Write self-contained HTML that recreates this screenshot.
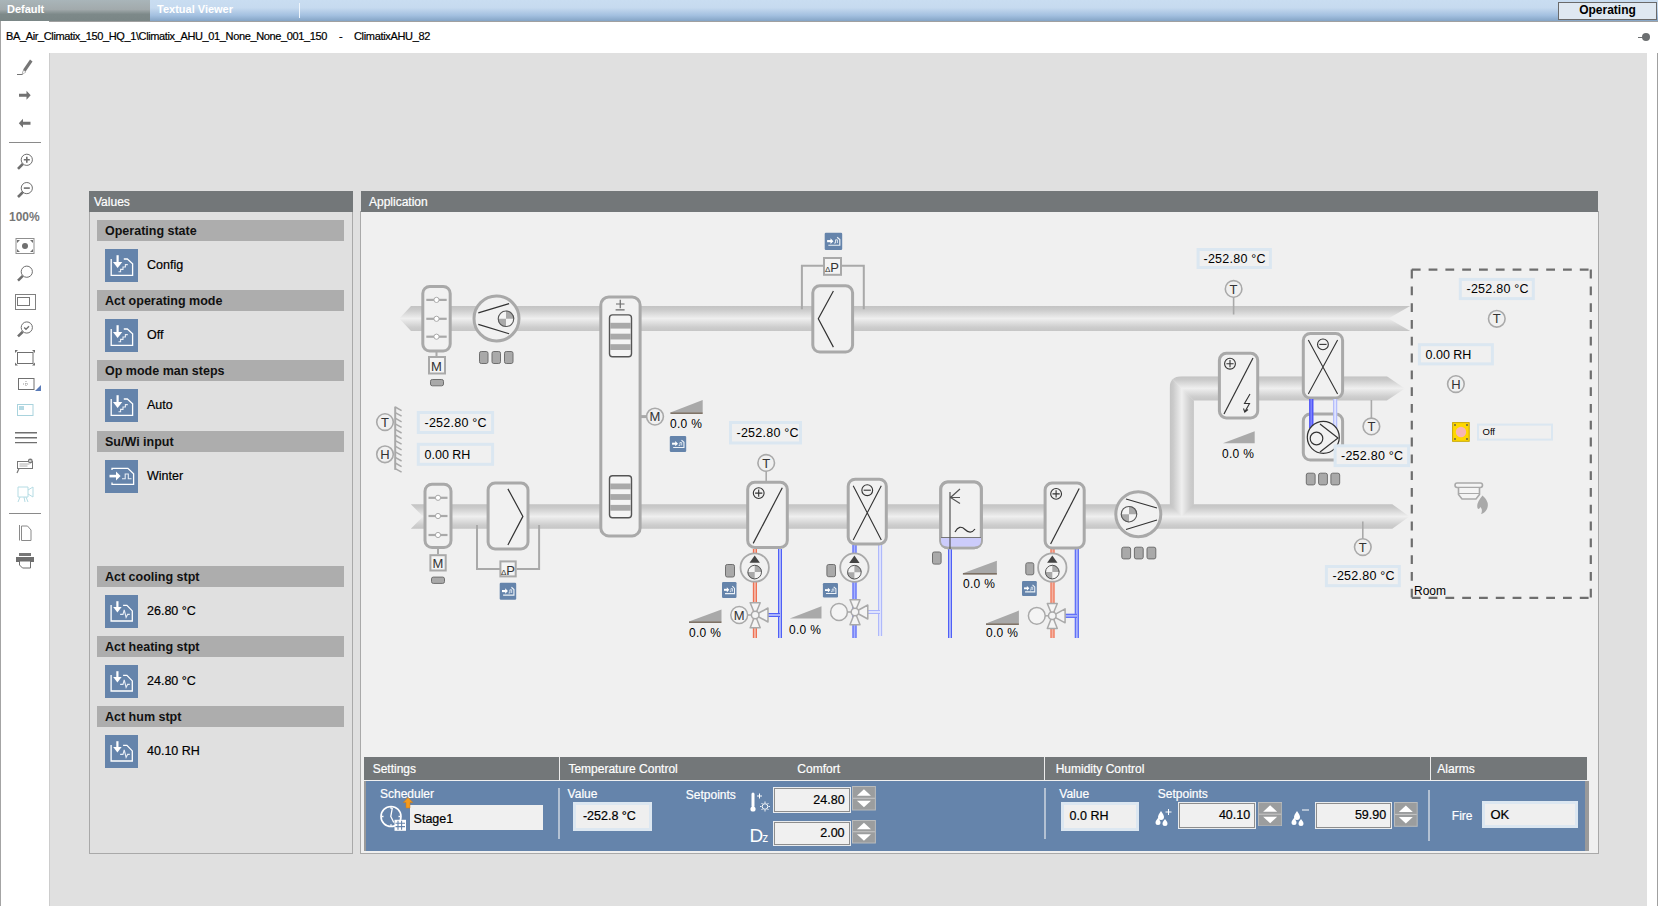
<!DOCTYPE html>
<html><head><meta charset="utf-8">
<style>
*{margin:0;padding:0;box-sizing:border-box}
html,body{width:1658px;height:906px;overflow:hidden;background:#fff;font-family:"Liberation Sans",sans-serif;position:relative}
.a{position:absolute}
#topbar{left:0;top:0;width:1658px;height:22px;background:linear-gradient(#c9ddf1 0%,#c6daef 35%,#a3c0e0 70%,#85a5c6 95%,#a0a0a0 95.5%)}
#tabdef{left:0;top:0;width:150px;height:21px;background:linear-gradient(#a9b5b9 0%,#a2aaac 45%,#7d8989 68%,#7a8686 100%)}
.tabt{font-weight:bold;font-size:11px;color:#fff;top:3px}
#opbtn{left:1558px;top:2px;width:99px;height:18px;background:#dfe8f1;border:1px solid #6a6a6a;font-weight:bold;font-size:12px;text-align:center;line-height:15px;color:#000}
#path{left:6px;top:30px;font-size:11px;color:#000;white-space:pre}
#lefttb{left:0;top:21px;width:49px;height:885px;border-left:1px solid #a4a4a4;background:#fff}
#main{left:49px;top:53px;width:1598px;height:853px;background:#e0e0e0;border-left:1px solid #cdcdcd}
#rline{left:1657px;top:53px;width:1px;height:853px;background:#a0a0a0}
.ph{background:#737779;color:#fff;font-size:12px;padding-left:5px;line-height:22px}
.sh{background:#adadad;color:#111;font-size:12.5px;font-weight:bold;padding-left:8px;line-height:23px;height:21px;overflow:hidden}
.ic{width:33px;height:33px;background:#6584ab}
.val{font-size:12.5px;color:#000}
svg text,.val,#path,.ph,.ts{-webkit-text-stroke:0.2px currentColor}
svg text[fill="#333"]{-webkit-text-stroke:0}
</style></head><body>
<div id="topbar" class="a"></div>
<div id="tabdef" class="a"></div>
<div class="a tabt" style="left:7px">Default</div>
<div class="a tabt" style="left:157px;color:#fff">Textual Viewer</div>
<div class="a" style="left:299px;top:3px;width:1px;height:15px;background:#f0f6fc"></div>
<div id="opbtn" class="a">Operating</div>
<div class="a" style="left:1638px;top:37px;width:6px;height:1px;background:#6c6f71"></div>
<div class="a" style="left:1642px;top:33px;width:8px;height:8px;border-radius:50%;background:#6c6f71"></div>
<div id="lefttb" class="a"></div>
<div id="main" class="a"></div>
<svg class="a" style="left:0;top:0" width="49" height="906" viewBox="0 0 49 906">
<g fill="none" stroke="#737373" stroke-width="1">
<path d="M17 74.5h5.5" stroke-width="1"/>
</g>
<path d="M22 74.5 L23.5 69 L30 59.5 L32.5 61.5 L26 71 Z" fill="#767676"/>
<path d="M22 74.5 L23.5 70 L26 72 Z" fill="#fff" stroke="#888" stroke-width="0.5"/>
<path d="M19 93.7h7.5v-3l4.2 4.5l-4.2 4.5v-3h-7.5z" fill="#727272"/>
<path d="M30.5 121.7h-7.5v-3l-4.2 4.5l4.2 4.5v-3h7.5z" fill="#727272"/>
<path d="M9 142.5h32" stroke="#8a8a8a" stroke-width="1"/>
<g fill="none" stroke="#6f6f6f">
<circle cx="26.8" cy="159.8" r="5.6" stroke-width="1"/>
<path d="M22.8 164 L18 168.8" stroke-width="2.6"/>
<path d="M26.8 156.8v6M23.8 159.8h6" stroke-width="1.6"/>
<circle cx="26.8" cy="188.1" r="5.6" stroke-width="1"/>
<path d="M22.8 192.3 L18 197" stroke-width="2.6"/>
<path d="M23.8 188.1h6" stroke-width="1.6"/>
<rect x="16" y="238.5" width="18" height="15" stroke="#8f8f8f" stroke-width="1"/>
<circle cx="26.8" cy="271.7" r="5.6" stroke-width="1"/>
<path d="M22.8 275.9 L18 280.6" stroke-width="2.6"/>
<rect x="15.5" y="294.5" width="20" height="15" stroke="#808080" stroke-width="1"/>
<rect x="17.5" y="297.5" width="12" height="8" stroke="#777" stroke-width="1"/>
<circle cx="26.8" cy="327.5" r="5.6" stroke-width="1"/>
<path d="M22.8 331.7 L18 336.4" stroke-width="2.6"/>
<path d="M24.2 327.5l1.8 1.8l3-3" stroke-width="1.4"/>
<rect x="17.5" y="352.5" width="15.5" height="11" stroke="#707070" stroke-width="1"/>
<rect x="18.5" y="378.5" width="15.5" height="11" stroke="#707070" stroke-width="1"/>
<path d="M15 432.8h22M15 437.7h22M15 442.6h22" stroke="#6f6f6f" stroke-width="1.4"/>
<rect x="17.5" y="461.5" width="15" height="7" stroke="#777"/>
<path d="M19.5 464h10M19.5 466h8" stroke="#999" stroke-width="0.8"/>
<path d="M19 468.5 L17 473" stroke="#777" stroke-width="1.2"/>
<path d="M9 513.5h32" stroke="#8a8a8a"/>
<path d="M19.5 525v15.5M21.5 526h6l3.5 4v10.5h-9.5z" stroke="#8a8a8a" stroke-width="1"/>
</g>
<circle cx="25" cy="246" r="3" fill="#707070"/>
<path d="M17 240h3l-3 3zM33 240h-3l3 3zM17 252h3l-3-3zM33 252h-3l3-3z" fill="#707070"/>
<path d="M15 350h3l-3 3zM35 350h-3l3 3zM15 365.5h3l-3-3zM35 365.5h-3l3-3z" fill="#707070"/>
<path d="M26 381v6M23 384h6" stroke="#999" stroke-width="1" stroke-dasharray="1 1"/>
<path d="M41 385v6h-6z" fill="#5a7bb8"/>
<rect x="17.5" y="404.5" width="15.5" height="11" fill="none" stroke="#a9d3dd" stroke-width="1"/>
<rect x="19" y="406" width="5" height="4" fill="#b5d9e3"/>
<circle cx="30.3" cy="461" r="2.4" fill="#777"/><path d="M29.2 459.9l2.2 2.2M31.4 459.9l-2.2 2.2" stroke="#fff" stroke-width="0.8"/>
<path d="M18 487h10v10h-10zM28 490l5-3v10l-5-3M20 497l-2 5M24 497l1 5M26 497l2 5" fill="none" stroke="#b5dce4" stroke-width="1"/>
<path d="M19 556h12v-3h-12z" fill="#777"/>
<path d="M16 557h18v5h-3v-1h-12v1h-3z" fill="#6f6f6f"/>
<path d="M19.5 561h11v7h-8l-3-3z" fill="#fff" stroke="#6f6f6f" stroke-width="1"/>
</svg>
<div id="path" class="a" style="letter-spacing:-0.37px">BA_Air_Climatix_150_HQ_1\Climatix_AHU_01_None_None_001_150</div><div class="a ts" style="left:339px;top:30px;font-size:11px">-</div><div class="a ts" style="left:354px;top:30px;font-size:11px;letter-spacing:-0.33px">ClimatixAHU_82</div>

<div id="rline" class="a"></div>
<div class="a" style="left:9px;top:210px;font-size:12px;font-weight:bold;color:#767676">100%</div>

<!-- Values panel -->
<div class="a" style="left:89px;top:191px;width:264px;height:663px;border:1px solid #a9a9a9;border-top:none"></div>
<div class="a ph" style="left:89px;top:191px;width:264px;height:21px">Values</div>

<div class="a sh" style="left:97px;top:220px;width:247px">Operating state</div>
<svg class="a ic" style="left:105px;top:249px" width="33" height="33" viewBox="0 0 33 33"><rect width="33" height="33" fill="#6584ab"/><path d="M6.2 10V26.3H27.6V14.8L22.3 10H18.8" fill="none" stroke="#fff" stroke-width="1.3"/><path d="M12.6 6.2V14" stroke="#fff" stroke-width="2.2"/><path d="M8 13L17.3 13L12.6 19Z" fill="#fff"/><path d="M13.5 22.8H15.6V20.4H18V18H20.4V15.6H22.8" fill="none" stroke="#e8eef6" stroke-width="1.1"/></svg>
<div class="a val" style="left:147px;top:258px">Config</div>
<div class="a sh" style="left:97px;top:290px;width:247px">Act operating mode</div>
<svg class="a ic" style="left:105px;top:319px" width="33" height="33" viewBox="0 0 33 33"><rect width="33" height="33" fill="#6584ab"/><path d="M6.2 10V26.3H27.6V14.8L22.3 10H18.8" fill="none" stroke="#fff" stroke-width="1.3"/><path d="M12.6 6.2V14" stroke="#fff" stroke-width="2.2"/><path d="M8 13L17.3 13L12.6 19Z" fill="#fff"/><path d="M13.5 22.8H15.6V20.4H18V18H20.4V15.6H22.8" fill="none" stroke="#e8eef6" stroke-width="1.1"/></svg>
<div class="a val" style="left:147px;top:328px">Off</div>
<div class="a sh" style="left:97px;top:360px;width:247px">Op mode man steps</div>
<svg class="a ic" style="left:105px;top:389px" width="33" height="33" viewBox="0 0 33 33"><rect width="33" height="33" fill="#6584ab"/><path d="M6.2 10V26.3H27.6V14.8L22.3 10H18.8" fill="none" stroke="#fff" stroke-width="1.3"/><path d="M12.6 6.2V14" stroke="#fff" stroke-width="2.2"/><path d="M8 13L17.3 13L12.6 19Z" fill="#fff"/><path d="M13.5 22.8H15.6V20.4H18V18H20.4V15.6H22.8" fill="none" stroke="#e8eef6" stroke-width="1.1"/></svg>
<div class="a val" style="left:147px;top:398px">Auto</div>
<div class="a sh" style="left:97px;top:431px;width:247px">Su/Wi input</div>
<svg class="a ic" style="left:105px;top:460px" width="33" height="33" viewBox="0 0 33 33"><rect width="33" height="33" fill="#6584ab"/><path d="M7 10V8.4H22.9L28.6 13.9V24.3H7V22.5" fill="none" stroke="#fff" stroke-width="1.3"/><path d="M4.5 16.1H11.8" stroke="#fff" stroke-width="2.6"/><path d="M11 11.6L15.6 16.1L11 20.6Z" fill="#fff"/><path d="M17 18.8H20.2V14H23.3V18.8H26.5" fill="none" stroke="#e8eef6" stroke-width="1.1"/></svg>
<div class="a val" style="left:147px;top:469px">Winter</div>
<div class="a sh" style="left:97px;top:566px;width:247px">Act cooling stpt</div>
<svg class="a ic" style="left:105px;top:595px" width="33" height="33" viewBox="0 0 33 33"><rect width="33" height="33" fill="#6584ab"/><path d="M6.1 9.9V26H27.3V15.9L21.9 10.4H18.1" fill="none" stroke="#fff" stroke-width="1.3"/><path d="M12.4 6.2V13" stroke="#fff" stroke-width="2.2"/><path d="M8.2 12L16.6 12L12.4 17.6Z" fill="#fff"/><path d="M15.1 19.4H18L19.2 14.8L21.1 22.5L22.6 19.4H24.8" fill="none" stroke="#e8eef6" stroke-width="1.1"/></svg>
<div class="a val" style="left:147px;top:604px">26.80 °C</div>
<div class="a sh" style="left:97px;top:636px;width:247px">Act heating stpt</div>
<svg class="a ic" style="left:105px;top:665px" width="33" height="33" viewBox="0 0 33 33"><rect width="33" height="33" fill="#6584ab"/><path d="M6.1 9.9V26H27.3V15.9L21.9 10.4H18.1" fill="none" stroke="#fff" stroke-width="1.3"/><path d="M12.4 6.2V13" stroke="#fff" stroke-width="2.2"/><path d="M8.2 12L16.6 12L12.4 17.6Z" fill="#fff"/><path d="M15.1 19.4H18L19.2 14.8L21.1 22.5L22.6 19.4H24.8" fill="none" stroke="#e8eef6" stroke-width="1.1"/></svg>
<div class="a val" style="left:147px;top:674px">24.80 °C</div>
<div class="a sh" style="left:97px;top:706px;width:247px">Act hum stpt</div>
<svg class="a ic" style="left:105px;top:735px" width="33" height="33" viewBox="0 0 33 33"><rect width="33" height="33" fill="#6584ab"/><path d="M6.1 9.9V26H27.3V15.9L21.9 10.4H18.1" fill="none" stroke="#fff" stroke-width="1.3"/><path d="M12.4 6.2V13" stroke="#fff" stroke-width="2.2"/><path d="M8.2 12L16.6 12L12.4 17.6Z" fill="#fff"/><path d="M15.1 19.4H18L19.2 14.8L21.1 22.5L22.6 19.4H24.8" fill="none" stroke="#e8eef6" stroke-width="1.1"/></svg>
<div class="a val" style="left:147px;top:744px">40.10 RH</div>

<!-- Application panel -->
<div class="a" style="left:360px;top:191px;width:239px;height:663px;"></div>
<div class="a" style="left:360px;top:211px;width:1239px;height:643px;background:#f0f0f0;border:1px solid #a9a9a9;border-top:none"></div>
<div class="a ph" style="left:361px;top:191px;width:1237px;height:21px;padding-left:8px">Application</div>

<!--SET-->
<div class="a" style="left:364px;top:757px;width:1223px;height:23px;background:#737779"></div>
<div class="a" style="left:559px;top:757px;width:1px;height:23px;background:#ececec"></div>
<div class="a" style="left:1044px;top:757px;width:1px;height:23px;background:#ececec"></div>
<div class="a" style="left:1430px;top:757px;width:1px;height:23px;background:#ececec"></div>
<div class="a ts" style="left:372.7px;top:762.7px;font-size:12px;line-height:12px;color:#fff;white-space:nowrap;">Settings</div>
<div class="a ts" style="left:568.4px;top:762.7px;font-size:12px;line-height:12px;color:#fff;white-space:nowrap;">Temperature Control</div>
<div class="a ts" style="left:797.3px;top:762.7px;font-size:12px;line-height:12px;color:#fff;white-space:nowrap;">Comfort</div>
<div class="a ts" style="left:1055.7px;top:762.7px;font-size:12px;line-height:12px;color:#fff;white-space:nowrap;">Humidity Control</div>
<div class="a ts" style="left:1437.3px;top:762.7px;font-size:12px;line-height:12px;color:#fff;white-space:nowrap;">Alarms</div>
<div class="a" style="left:364px;top:781px;width:1225px;height:70px;background:#6584ab;border-left:2px solid #9a9a9a;border-right:4px solid #9a9a9a"></div>
<div class="a" style="left:558px;top:788px;width:2px;height:51px;background:#b3c1d3"></div>
<div class="a" style="left:1044px;top:788.3px;width:2px;height:50.5px;background:#b3c1d3"></div>
<div class="a" style="left:1428px;top:790.2px;width:2px;height:50.5px;background:#b3c1d3"></div>
<div class="a ts" style="left:380px;top:787.6px;font-size:12px;line-height:12px;color:#fff;white-space:nowrap;">Scheduler</div>
<div class="a ts" style="left:567.6px;top:787.6px;font-size:12px;line-height:12px;color:#fff;white-space:nowrap;">Value</div>
<div class="a ts" style="left:685.8px;top:788.6px;font-size:12px;line-height:12px;color:#fff;white-space:nowrap;">Setpoints</div>
<div class="a ts" style="left:1059.3px;top:787.6px;font-size:12px;line-height:12px;color:#fff;white-space:nowrap;">Value</div>
<div class="a ts" style="left:1157.8px;top:787.8px;font-size:12px;line-height:12px;color:#fff;white-space:nowrap;">Setpoints</div>
<div class="a ts" style="left:1451.8px;top:809.7px;font-size:12px;line-height:12px;color:#fff;white-space:nowrap;">Fire</div>
<div class="a" style="left:410px;top:805px;width:133px;height:25px;background:#f0f0f0"></div>
<div class="a ts" style="left:413.6px;top:812.5px;font-size:12.5px;line-height:12.5px;color:#000;white-space:nowrap;">Stage1</div>
<div class="a" style="left:572.9px;top:802.1px;width:79.10000000000002px;height:28.899999999999977px;background:#efefef;border:3px solid #dce7f1"></div>
<div class="a ts" style="left:582.9px;top:810.1px;font-size:12.5px;line-height:12.5px;color:#000;white-space:nowrap;">-252.8 °C</div>
<div class="a" style="left:1060.9px;top:802.1px;width:77.89999999999986px;height:28.5px;background:#efefef;border:3px solid #dce7f1"></div>
<div class="a ts" style="left:1069.6px;top:810.2px;font-size:12.5px;line-height:12.5px;color:#000;white-space:nowrap;">0.0 RH</div>
<div class="a" style="left:1482.1px;top:801.2px;width:95.80000000000018px;height:26.399999999999977px;background:#efefef;border:3px solid #dce7f1"></div>
<div class="a ts" style="left:1490.4px;top:807.5px;font-size:13px;line-height:13px;color:#000;white-space:nowrap;">OK</div>
<div class="a" style="left:773.4px;top:787.4px;width:77.20000000000005px;height:25.300000000000068px;background:#f0f0f0;border:1px solid #e9ecef;box-shadow:inset 0 0 0 1px #8d8d8d"></div>
<div class="a ts" style="left:773.4px;top:793.5px;width:71.20000000000005px;text-align:right;font-size:12.5px;line-height:12.5px;color:#000">24.80</div>
<svg class="a" style="left:852.2px;top:786.2px" width="23.899999999999977" height="24.5" viewBox="0 0 23.899999999999977 24.5"><rect x="0.5" y="0.5" width="22.899999999999977" height="23.5" fill="#9b9d9e" stroke="#b9bbbc"/><line x1="1" y1="12.25" x2="22.899999999999977" y2="12.25" stroke="#c8c8c8" stroke-width="1"/><path d="M4.949999999999989 9.75L11.949999999999989 3.25L18.94999999999999 9.75Z" fill="#fff"/><path d="M4.949999999999989 14.75L11.949999999999989 21.25L18.94999999999999 14.75Z" fill="#fff"/></svg>
<div class="a" style="left:773.4px;top:820.7px;width:77.20000000000005px;height:25.799999999999955px;background:#f0f0f0;border:1px solid #e9ecef;box-shadow:inset 0 0 0 1px #8d8d8d"></div>
<div class="a ts" style="left:773.4px;top:826.6px;width:71.20000000000005px;text-align:right;font-size:12.5px;line-height:12.5px;color:#000">2.00</div>
<svg class="a" style="left:852.2px;top:820px" width="23.899999999999977" height="23.5" viewBox="0 0 23.899999999999977 23.5"><rect x="0.5" y="0.5" width="22.899999999999977" height="22.5" fill="#9b9d9e" stroke="#b9bbbc"/><line x1="1" y1="11.75" x2="22.899999999999977" y2="11.75" stroke="#c8c8c8" stroke-width="1"/><path d="M4.949999999999989 9.25L11.949999999999989 2.75L18.94999999999999 9.25Z" fill="#fff"/><path d="M4.949999999999989 14.25L11.949999999999989 20.75L18.94999999999999 14.25Z" fill="#fff"/></svg>
<div class="a" style="left:1178.2px;top:802.4px;width:78.20000000000005px;height:26.600000000000023px;background:#f0f0f0;border:1px solid #e9ecef;box-shadow:inset 0 0 0 1px #8d8d8d"></div>
<div class="a ts" style="left:1178.2px;top:808.6px;width:72.0px;text-align:right;font-size:12.5px;line-height:12.5px;color:#000">40.10</div>
<svg class="a" style="left:1257.7px;top:802.1px" width="24.299999999999955" height="24.399999999999977" viewBox="0 0 24.299999999999955 24.399999999999977"><rect x="0.5" y="0.5" width="23.299999999999955" height="23.399999999999977" fill="#9b9d9e" stroke="#b9bbbc"/><line x1="1" y1="12.199999999999989" x2="23.299999999999955" y2="12.199999999999989" stroke="#c8c8c8" stroke-width="1"/><path d="M5.149999999999977 9.699999999999989L12.149999999999977 3.1999999999999886L19.149999999999977 9.699999999999989Z" fill="#fff"/><path d="M5.149999999999977 14.699999999999989L12.149999999999977 21.19999999999999L19.149999999999977 14.699999999999989Z" fill="#fff"/></svg>
<div class="a" style="left:1315.1px;top:802.1px;width:77.40000000000009px;height:26.699999999999932px;background:#f0f0f0;border:1px solid #e9ecef;box-shadow:inset 0 0 0 1px #8d8d8d"></div>
<div class="a ts" style="left:1315.1px;top:809.3px;width:71.10000000000014px;text-align:right;font-size:12.5px;line-height:12.5px;color:#000">59.90</div>
<svg class="a" style="left:1393.9px;top:802px" width="23.699999999999818" height="24.799999999999955" viewBox="0 0 23.699999999999818 24.799999999999955"><rect x="0.5" y="0.5" width="22.699999999999818" height="23.799999999999955" fill="#9b9d9e" stroke="#b9bbbc"/><line x1="1" y1="12.399999999999977" x2="22.699999999999818" y2="12.399999999999977" stroke="#c8c8c8" stroke-width="1"/><path d="M4.849999999999909 9.899999999999977L11.849999999999909 3.3999999999999773L18.84999999999991 9.899999999999977Z" fill="#fff"/><path d="M4.849999999999909 14.899999999999977L11.849999999999909 21.399999999999977L18.84999999999991 14.899999999999977Z" fill="#fff"/></svg>
<svg class="a" style="left:0;top:0" width="1658" height="906" viewBox="0 0 1658 906">
<g fill="none" stroke="#fff" stroke-width="1.6">
<circle cx="391" cy="816.5" r="10"/>
<path d="M392.3 808L390.8 816.5L393.8 822.5M381.5 816.5h2M391 826v-1.8M400.5 816.5h-2M391 807v1.8" stroke-width="1.3"/>
</g>
<rect x="394.5" y="819.8" width="11.5" height="11" fill="#fff"/>
<path d="M395.5 823.2h9.5M395.5 826.6h9.5M398 820.8v9M401.6 820.8v9" stroke="#6584ab" stroke-width="1.1"/>
<path d="M408 797.5L412.8 802.5H410V808H406V802.5H403.2Z" fill="#f39a1e" stroke="#d07a10" stroke-width="0.5"/>
<g fill="#fff">
<rect x="751.5" y="792.5" width="3" height="15" rx="1.5"/>
<circle cx="753" cy="809" r="2.6"/>
</g>
<path d="M757 796h5M759.5 793.5v5" stroke="#fff" stroke-width="1"/>
<circle cx="765" cy="806.5" r="2.8" fill="none" stroke="#fff" stroke-width="1"/>
<path d="M765 801.5v1.5M765 810v1.5M760 806.5h1.5M768.5 806.5h1.5M761.5 803l1 1M767.5 809l1 1M768.5 803l-1 1M762.5 809l-1 1" stroke="#fff" stroke-width="0.9"/>
<text x="749.5" y="841.5" font-family="Liberation Sans, sans-serif" font-size="19" fill="#fff" letter-spacing="-1">D<tspan font-size="12" dy="0">z</tspan></text>
<path d="M1161 811q-3 4 -3 6a3 3 0 0 0 6 0q0 -2 -3 -6zM1158 818q-2.5 3 -2.5 4.5a2.5 2.5 0 0 0 5 0q0 -1.5 -2.5 -4.5zM1165 819q-2.5 3 -2.5 4.5a2.5 2.5 0 0 0 5 0q0 -1.5 -2.5 -4.5z" fill="#fff"/>
<path d="M1165.5 812h6M1168.5 809v6" stroke="#fff" stroke-width="1"/>
<path d="M1297 811q-3 4 -3 6a3 3 0 0 0 6 0q0 -2 -3 -6zM1294 818q-2.5 3 -2.5 4.5a2.5 2.5 0 0 0 5 0q0 -1.5 -2.5 -4.5zM1301 819q-2.5 3 -2.5 4.5a2.5 2.5 0 0 0 5 0q0 -1.5 -2.5 -4.5z" fill="#fff"/>
<path d="M1302 810h7" stroke="#fff" stroke-width="1"/>
</svg>
<!--/SET-->
<!--DIAG-->
<svg class="a" style="left:0;top:0" width="1658" height="906" viewBox="0 0 1658 906" font-family="Liberation Sans, sans-serif">
<defs><linearGradient id="dh" x1="0" y1="0" x2="0" y2="1"><stop offset="0" stop-color="#c3c3c3"/><stop offset="0.15" stop-color="#cbcbcb"/><stop offset="0.5" stop-color="#efefef"/><stop offset="0.85" stop-color="#cdcdcd"/><stop offset="1" stop-color="#c6c6c6"/></linearGradient><linearGradient id="dv" x1="0" y1="0" x2="1" y2="0"><stop offset="0" stop-color="#c3c3c3"/><stop offset="0.15" stop-color="#cbcbcb"/><stop offset="0.5" stop-color="#efefef"/><stop offset="0.85" stop-color="#cdcdcd"/><stop offset="1" stop-color="#c6c6c6"/></linearGradient></defs>
<path d="M399.3 318.5L411 306H1410.2L1388.5 318.5L1410.2 331H411Z" fill="url(#dh)"/>
<path d="M410.8 504.2L423 516.5L410.8 528.7H1392.3L1409.3 516.5L1392.3 504.2Z" fill="url(#dh)"/>
<defs><linearGradient id="dm" gradientUnits="userSpaceOnUse" x1="0" y1="376.2" x2="0" y2="400.5"><stop offset="0" stop-color="#c3c3c3"/><stop offset="0.15" stop-color="#cbcbcb"/><stop offset="0.5" stop-color="#efefef"/><stop offset="0.85" stop-color="#cdcdcd"/><stop offset="1" stop-color="#c6c6c6"/></linearGradient><linearGradient id="dvv" gradientUnits="userSpaceOnUse" x1="1169.6" y1="0" x2="1193.9" y2="0"><stop offset="0" stop-color="#c3c3c3"/><stop offset="0.15" stop-color="#cbcbcb"/><stop offset="0.5" stop-color="#efefef"/><stop offset="0.85" stop-color="#cdcdcd"/><stop offset="1" stop-color="#c6c6c6"/></linearGradient><clipPath id="cc"><path d="M1169.6 600V388.2Q1169.6 376.2 1181.6 376.2H1500V600Z"/></clipPath></defs>
<g clip-path="url(#cc)">
<path d="M1169.6 376.2H1386.9L1404.8 388.4L1386.9 400.5H1193.9Z" fill="url(#dm)"/>
<path d="M1169.6 376.2L1193.9 400.5V504.2L1181.75 516.4L1169.6 504.2Z" fill="url(#dvv)"/>
</g>
<rect x="422.8" y="286.5" width="27.399999999999977" height="64.5" rx="7" fill="#f1f1f1" stroke="#a9a9a9" stroke-width="3"/>
<line x1="426.3" y1="299.9" x2="446.7" y2="299.9" stroke="#a9a9a9" stroke-width="2.2"/>
<circle cx="436.5" cy="299.9" r="2.6" fill="#fff" stroke="#a9a9a9" stroke-width="1"/>
<line x1="426.3" y1="318.8" x2="446.7" y2="318.8" stroke="#a9a9a9" stroke-width="2.2"/>
<circle cx="436.5" cy="318.8" r="2.6" fill="#fff" stroke="#a9a9a9" stroke-width="1"/>
<line x1="426.3" y1="336.7" x2="446.7" y2="336.7" stroke="#a9a9a9" stroke-width="2.2"/>
<circle cx="436.5" cy="336.7" r="2.6" fill="#fff" stroke="#a9a9a9" stroke-width="1"/>
<line x1="436.5" y1="351.5" x2="436.5" y2="356" stroke="#a9a9a9" stroke-width="2"/>
<rect x="429" y="357" width="16" height="16.5" fill="#f4f4f4" stroke="#a9a9a9" stroke-width="2"/>
<text x="436.5" y="370.5" font-size="13" text-anchor="middle" fill="#333">M</text>
<rect x="430.5" y="379.5" width="13" height="6.300000000000011" rx="1.8" fill="#a9a9a9" stroke="#6f6f6f" stroke-width="1"/>
<circle cx="496.5" cy="318.5" r="22.5" fill="#f1f1f1" stroke="#a9a9a9" stroke-width="3"/>
<path d="M478.3 312.8L509.1 303.7M478.3 324.4L509.1 333.7" stroke="#333" stroke-width="1.2"/>
<circle cx="506.0" cy="318.8" r="8.3" fill="#f4f4f4"/>
<path d="M506.0 318.8V310.5A8.3 8.3 0 0 1 514.3 318.8Z M506.0 318.8V327.1A8.3 8.3 0 0 1 497.7 318.8Z" fill="#a9a9a9"/>
<circle cx="506.0" cy="318.8" r="7.750000000000001" fill="none" stroke="#555" stroke-width="1.1"/>
<rect x="479.5" y="351.5" width="8.5" height="12" rx="1.8" fill="#a9a9a9" stroke="#6f6f6f" stroke-width="1"/>
<rect x="492.0" y="351.5" width="8.5" height="12" rx="1.8" fill="#a9a9a9" stroke="#6f6f6f" stroke-width="1"/>
<rect x="504.5" y="351.5" width="8.5" height="12" rx="1.8" fill="#a9a9a9" stroke="#6f6f6f" stroke-width="1"/>
<rect x="600.8" y="297.0" width="39.30000000000007" height="238.89999999999998" rx="8" fill="#f1f1f1" stroke="#a9a9a9" stroke-width="3"/>
<path d="M616 304H624.5M620.25 299.8V308.2M615.6 309.8H624.6" stroke="#6a6a6a" stroke-width="1.2"/>
<rect x="609.5" y="314.9" width="22" height="41.79999999999999" rx="3" fill="#f4f4f4" stroke="#555" stroke-width="1.4"/>
<rect x="610.2" y="322.8" width="20.6" height="5.8" fill="#a9a9a9"/>
<rect x="610.2" y="333.70000000000005" width="20.6" height="5.8" fill="#a9a9a9"/>
<rect x="610.2" y="344.20000000000005" width="20.6" height="5.8" fill="#a9a9a9"/>
<rect x="609.5" y="475.8" width="22" height="41.99999999999998" rx="3" fill="#f4f4f4" stroke="#555" stroke-width="1.4"/>
<rect x="610.2" y="483.5" width="20.6" height="5.8" fill="#a9a9a9"/>
<rect x="610.2" y="494.1" width="20.6" height="5.8" fill="#a9a9a9"/>
<rect x="610.2" y="504.90000000000003" width="20.6" height="5.8" fill="#a9a9a9"/>
<line x1="641" y1="416.6" x2="647" y2="416.6" stroke="#a9a9a9" stroke-width="3"/>
<circle cx="655" cy="416.6" r="8.4" fill="#f0f0f0" stroke="#a9a9a9" stroke-width="1.6"/>
<text x="655" y="421.20000000000005" font-size="13" text-anchor="middle" fill="#333">M</text>
<path d="M670.4 412.6L702.7 400V412.6Z" fill="#a9a9a9"/>
<line x1="670.4" y1="413.20000000000005" x2="702.7" y2="413.20000000000005" stroke="#5a4a3a" stroke-width="1.2"/>
<text x="670" y="428" font-size="12" fill="#000" letter-spacing="0.3">0.0 %</text>
<rect x="669.8" y="435.9" width="16.4" height="16" rx="1.2" fill="#6584ab"/>
<g transform="translate(669.8 435.9) scale(1.025 1.000)"><path d="M2.2 7.8H6" stroke="#fff" stroke-width="2"/><path d="M5.3 5.2L8 7.8L5.3 10.4Z" fill="#fff"/><path d="M8.6 9.6H9.9V6.6H11.6V9.6" fill="none" stroke="#dfe7f0" stroke-width="0.9"/><path d="M3.3 11.6H13.8V6.4L11.4 4.2" fill="none" stroke="#eef3f8" stroke-width="1.1"/></g>
<path d="M801.9 309.2V265.8H823M842 265.8H863.8V309.2" fill="none" stroke="#a9a9a9" stroke-width="2"/>
<rect x="824" y="258" width="17" height="16.8" fill="#f4f4f4" stroke="#a9a9a9" stroke-width="2"/>
<text x="832" y="272.3" font-size="13" text-anchor="middle" fill="#333"><tspan font-size="8">Δ</tspan>P</text>
<rect x="824.7" y="232.7" width="17.5" height="17.3" rx="1.2" fill="#6584ab"/>
<g transform="translate(824.7 232.7) scale(1.094 1.081)"><path d="M2.2 7.8H6" stroke="#fff" stroke-width="2"/><path d="M5.3 5.2L8 7.8L5.3 10.4Z" fill="#fff"/><path d="M8.6 9.6H9.9V6.6H11.6V9.6" fill="none" stroke="#dfe7f0" stroke-width="0.9"/><path d="M3.3 11.6H13.8V6.4L11.4 4.2" fill="none" stroke="#eef3f8" stroke-width="1.1"/></g>
<rect x="812.8" y="285.8" width="39.80000000000007" height="66.19999999999999" rx="7" fill="#f1f1f1" stroke="#a9a9a9" stroke-width="3"/>
<path d="M833.4 291L818.3 318.8L833.4 347.1" fill="none" stroke="#333" stroke-width="1.2"/>
<line x1="1233.6" y1="297" x2="1233.6" y2="314.5" stroke="#a9a9a9" stroke-width="1.6"/>
<circle cx="1233.6" cy="288.9" r="8.3" fill="#f0f0f0" stroke="#a9a9a9" stroke-width="1.6"/>
<text x="1233.6" y="293.5" font-size="13" text-anchor="middle" fill="#333">T</text>
<rect x="1198.1" y="249.5" width="72.30000000000018" height="18" fill="#f0f0f0" stroke="#dbe7f1" stroke-width="3"/>
<text x="1203.5" y="262.8" font-size="12.5" fill="#000" letter-spacing="0.25">-252.80 °C</text>
<line x1="395.2" y1="406.6" x2="395.2" y2="469.8" stroke="#a9a9a9" stroke-width="2"/>
<path d="M395.2 407.0l6.4 3.6M395.2 412.6l6.4 3.6M395.2 418.2l6.4 3.6M395.2 423.8l6.4 3.6M395.2 429.4l6.4 3.6M395.2 435.0l6.4 3.6M395.2 440.6l6.4 3.6M395.2 446.2l6.4 3.6M395.2 451.8l6.4 3.6M395.2 457.4l6.4 3.6M395.2 463.0l6.4 3.6M395.2 468.6l6.4 3.6" stroke="#a9a9a9" stroke-width="1.5"/>
<circle cx="385" cy="422.1" r="8.3" fill="#f0f0f0" stroke="#a9a9a9" stroke-width="1.6"/>
<text x="385" y="426.70000000000005" font-size="13" text-anchor="middle" fill="#333">T</text>
<circle cx="385" cy="454.3" r="8.3" fill="#f0f0f0" stroke="#a9a9a9" stroke-width="1.6"/>
<text x="385" y="458.90000000000003" font-size="13" text-anchor="middle" fill="#333">H</text>
<rect x="418.3" y="412.5" width="74.30000000000001" height="20" fill="#f0f0f0" stroke="#dbe7f1" stroke-width="3"/>
<text x="424.5" y="426.8" font-size="12.5" fill="#000" letter-spacing="0.25">-252.80 °C</text>
<rect x="418.3" y="444.3" width="74.30000000000001" height="20.0" fill="#f0f0f0" stroke="#dbe7f1" stroke-width="3"/>
<text x="424.5" y="458.6" font-size="12.5" fill="#000" letter-spacing="0">0.00 RH</text>
<rect x="425.0" y="484.2" width="26.0" height="63.400000000000034" rx="7" fill="#f1f1f1" stroke="#a9a9a9" stroke-width="3"/>
<line x1="428.5" y1="497.8" x2="447.5" y2="497.8" stroke="#a9a9a9" stroke-width="2.2"/>
<circle cx="438.0" cy="497.8" r="2.6" fill="#fff" stroke="#a9a9a9" stroke-width="1"/>
<line x1="428.5" y1="516" x2="447.5" y2="516" stroke="#a9a9a9" stroke-width="2.2"/>
<circle cx="438.0" cy="516" r="2.6" fill="#fff" stroke="#a9a9a9" stroke-width="1"/>
<line x1="428.5" y1="535" x2="447.5" y2="535" stroke="#a9a9a9" stroke-width="2.2"/>
<circle cx="438.0" cy="535" r="2.6" fill="#fff" stroke="#a9a9a9" stroke-width="1"/>
<line x1="438.0" y1="548.1" x2="438.0" y2="554.2" stroke="#a9a9a9" stroke-width="2"/>
<rect x="430.4" y="555.2" width="15.300000000000011" height="15.299999999999955" fill="#f4f4f4" stroke="#a9a9a9" stroke-width="2"/>
<text x="438.0" y="567.5" font-size="13" text-anchor="middle" fill="#333">M</text>
<rect x="431.5" y="577.1" width="13" height="6.2999999999999545" rx="1.8" fill="#a9a9a9" stroke="#6f6f6f" stroke-width="1"/>
<path d="M477 525V568.9H500M516.5 568.9H539.1V525" fill="none" stroke="#a9a9a9" stroke-width="2"/>
<rect x="488.1" y="483.1" width="39.89999999999998" height="65.79999999999995" rx="7" fill="#f1f1f1" stroke="#a9a9a9" stroke-width="3"/>
<path d="M507.9 488.9L522.9 516.4L507.9 545" fill="none" stroke="#333" stroke-width="1.2"/>
<rect x="500.4" y="561.4" width="15.3" height="15" fill="#f4f4f4" stroke="#a9a9a9" stroke-width="2"/>
<text x="508" y="574.5" font-size="13" text-anchor="middle" fill="#333"><tspan font-size="8">Δ</tspan>P</text>
<rect x="499.7" y="582.8" width="16.5" height="17" rx="1.2" fill="#6584ab"/>
<g transform="translate(499.7 582.8) scale(1.031 1.062)"><path d="M2.2 7.8H6" stroke="#fff" stroke-width="2"/><path d="M5.3 5.2L8 7.8L5.3 10.4Z" fill="#fff"/><path d="M8.6 9.6H9.9V6.6H11.6V9.6" fill="none" stroke="#dfe7f0" stroke-width="0.9"/><path d="M3.3 11.6H13.8V6.4L11.4 4.2" fill="none" stroke="#eef3f8" stroke-width="1.1"/></g>
<rect x="752.9" y="549" width="4" height="89" fill="#f3b3a3"/>
<line x1="753.4" y1="549" x2="753.4" y2="638" stroke="#ef6a4a" stroke-width="1"/>
<line x1="756.4" y1="549" x2="756.4" y2="638" stroke="#ef6a4a" stroke-width="1"/>
<rect x="778" y="549" width="4" height="89" fill="#a9b3fb"/>
<line x1="778.5" y1="549" x2="778.5" y2="638" stroke="#4f5ff7" stroke-width="1"/>
<line x1="781.5" y1="549" x2="781.5" y2="638" stroke="#4f5ff7" stroke-width="1"/>
<rect x="767" y="613" width="13" height="4" fill="#a9b3fb"/>
<line x1="767" y1="613.5" x2="780" y2="613.5" stroke="#4f5ff7" stroke-width="1"/>
<line x1="767" y1="616.5" x2="780" y2="616.5" stroke="#4f5ff7" stroke-width="1"/>
<rect x="747.7" y="482.3" width="39.59999999999991" height="65.09999999999997" rx="7" fill="#f1f1f1" stroke="#a9a9a9" stroke-width="3"/>
<line x1="753.2" y1="543.4" x2="782.3" y2="487.8" stroke="#333" stroke-width="1.2"/>
<circle cx="758.7" cy="493.1" r="5.4" fill="none" stroke="#333" stroke-width="1.1"/><path d="M755.1 493.1h7.2M758.7 489.5v7.2" stroke="#333" stroke-width="1.1"/>
<line x1="766.2" y1="471" x2="766.2" y2="482" stroke="#a9a9a9" stroke-width="1.6"/>
<circle cx="766.2" cy="462.9" r="8.3" fill="#f0f0f0" stroke="#a9a9a9" stroke-width="1.6"/>
<text x="766.2" y="467.5" font-size="13" text-anchor="middle" fill="#333">T</text>
<rect x="730.5" y="422.5" width="70" height="20.5" fill="#f0f0f0" stroke="#dbe7f1" stroke-width="3"/>
<text x="736.5" y="437.05" font-size="12.5" fill="#000" letter-spacing="0.25">-252.80 °C</text>
<circle cx="754.7" cy="567.5" r="14.2" fill="#f1f1f1" stroke="#a9a9a9" stroke-width="1.8"/>
<path d="M749.5 562.8H759.9000000000001L754.7 555.5Z" fill="#444"/>
<circle cx="754.7" cy="572.1" r="7.3" fill="#f4f4f4"/>
<path d="M754.7 572.1V564.8000000000001A7.3 7.3 0 0 1 762.0 572.1Z M754.7 572.1V579.4A7.3 7.3 0 0 1 747.4000000000001 572.1Z" fill="#a9a9a9"/>
<circle cx="754.7" cy="572.1" r="6.8" fill="none" stroke="#555" stroke-width="1.0"/>
<path d="M750.2 602.7H760.2L755.2 615Z M750.2 627.8H760.2L755.2 615Z M768.0 608V622L755.2 615Z" fill="#f4f4f4" stroke="#a9a9a9" stroke-width="1.5" stroke-linejoin="round"/>
<circle cx="755.2" cy="615" r="3.8" fill="#f4f4f4" stroke="#a9a9a9" stroke-width="1.5"/>
<line x1="747.2" y1="615" x2="751.7" y2="615" stroke="#a9a9a9" stroke-width="1.5"/>
<circle cx="739.2" cy="615" r="8.4" fill="#f4f4f4" stroke="#a9a9a9" stroke-width="1.5"/>
<text x="739.2" y="619.6" font-size="13" text-anchor="middle" fill="#333">M</text>
<rect x="725.5" y="564.5" width="9" height="12.5" rx="1.8" fill="#a9a9a9" stroke="#6f6f6f" stroke-width="1"/>
<rect x="722" y="582" width="14.5" height="16" rx="1.2" fill="#6584ab"/>
<g transform="translate(722 582) scale(0.906 1.000)"><path d="M2.2 7.8H6" stroke="#fff" stroke-width="2"/><path d="M5.3 5.2L8 7.8L5.3 10.4Z" fill="#fff"/><path d="M8.6 9.6H9.9V6.6H11.6V9.6" fill="none" stroke="#dfe7f0" stroke-width="0.9"/><path d="M3.3 11.6H13.8V6.4L11.4 4.2" fill="none" stroke="#eef3f8" stroke-width="1.1"/></g>
<path d="M689 621.5L721.5 609.5V621.5Z" fill="#a9a9a9"/>
<line x1="689" y1="622.1" x2="721.5" y2="622.1" stroke="#5a4a3a" stroke-width="1.2"/>
<text x="689" y="637" font-size="12" fill="#000" letter-spacing="0.3">0.0 %</text>
<rect x="852.5" y="545" width="4" height="93" fill="#a9b3fb"/>
<line x1="853.0" y1="545" x2="853.0" y2="638" stroke="#4f5ff7" stroke-width="1"/>
<line x1="856.0" y1="545" x2="856.0" y2="638" stroke="#4f5ff7" stroke-width="1"/>
<rect x="878.1" y="545" width="4" height="91" fill="#dfe3fd"/>
<line x1="878.6" y1="545" x2="878.6" y2="636" stroke="#aab4fb" stroke-width="1"/>
<line x1="881.6" y1="545" x2="881.6" y2="636" stroke="#aab4fb" stroke-width="1"/>
<rect x="867" y="610" width="13" height="4" fill="#dfe3fd"/>
<line x1="867" y1="610.5" x2="880" y2="610.5" stroke="#aab4fb" stroke-width="1"/>
<line x1="867" y1="613.5" x2="880" y2="613.5" stroke="#aab4fb" stroke-width="1"/>
<rect x="848.2" y="479.2" width="38.09999999999991" height="64.69999999999999" rx="7" fill="#f1f1f1" stroke="#a9a9a9" stroke-width="3"/>
<path d="M853.2 485.7L881.3 539.9M881.3 485.7L853.2 539.9" stroke="#333" stroke-width="1.1"/>
<circle cx="867.25" cy="490.2" r="5.4" fill="#f1f1f1" stroke="#333" stroke-width="1.1"/><path d="M863.65 490.2h7.2" stroke="#333" stroke-width="1.1"/>
<circle cx="854.4" cy="567.6" r="14.2" fill="#f1f1f1" stroke="#a9a9a9" stroke-width="1.8"/>
<path d="M849.1999999999999 562.9H859.6L854.4 555.6Z" fill="#444"/>
<circle cx="854.4" cy="572.2" r="7.3" fill="#f4f4f4"/>
<path d="M854.4 572.2V564.9000000000001A7.3 7.3 0 0 1 861.6999999999999 572.2Z M854.4 572.2V579.5A7.3 7.3 0 0 1 847.1 572.2Z" fill="#a9a9a9"/>
<circle cx="854.4" cy="572.2" r="6.8" fill="none" stroke="#555" stroke-width="1.0"/>
<path d="M850 599.7H860L855 612Z M850 624.8H860L855 612Z M867.8 605V619L855 612Z" fill="#f4f4f4" stroke="#a9a9a9" stroke-width="1.5" stroke-linejoin="round"/>
<circle cx="855" cy="612" r="3.8" fill="#f4f4f4" stroke="#a9a9a9" stroke-width="1.5"/>
<line x1="847" y1="612" x2="851.5" y2="612" stroke="#a9a9a9" stroke-width="1.5"/>
<circle cx="839" cy="612" r="8.4" fill="#f4f4f4" stroke="#a9a9a9" stroke-width="1.5"/>
<rect x="826.9" y="564.5" width="8.600000000000023" height="12.200000000000045" rx="1.8" fill="#a9a9a9" stroke="#6f6f6f" stroke-width="1"/>
<rect x="822.9" y="583" width="15.1" height="14.5" rx="1.2" fill="#6584ab"/>
<g transform="translate(822.9 583) scale(0.944 0.906)"><path d="M2.2 7.8H6" stroke="#fff" stroke-width="2"/><path d="M5.3 5.2L8 7.8L5.3 10.4Z" fill="#fff"/><path d="M8.6 9.6H9.9V6.6H11.6V9.6" fill="none" stroke="#dfe7f0" stroke-width="0.9"/><path d="M3.3 11.6H13.8V6.4L11.4 4.2" fill="none" stroke="#eef3f8" stroke-width="1.1"/></g>
<path d="M789.7 618.4L821.5 606.2V618.4Z" fill="#a9a9a9"/>
<text x="789" y="634" font-size="12" fill="#000" letter-spacing="0.3">0.0 %</text>
<rect x="948" y="549" width="4" height="89" fill="#a9b3fb"/>
<line x1="948.5" y1="549" x2="948.5" y2="638" stroke="#4f5ff7" stroke-width="1"/>
<line x1="951.5" y1="549" x2="951.5" y2="638" stroke="#4f5ff7" stroke-width="1"/>
<rect x="940.8" y="482.1" width="40.5" height="65.60000000000002" rx="7" fill="#f1f1f1" stroke="#a9a9a9" stroke-width="3"/>
<path d="M941 537.5H981V541Q981 547.5 974 547.5H948Q941 547.5 941 541Z" fill="#ccccfb"/>
<line x1="941" y1="537.5" x2="981" y2="537.5" stroke="#777" stroke-width="1.2"/>
<rect x="940.8" y="482.1" width="40.5" height="65.60000000000002" rx="7" fill="#f1f1f1" stroke="#a9a9a9" stroke-width="3"/>
<path d="M941 537.5H981V541Q981 546 975 546.5H947Q941 546 941 541Z" fill="#ccccfb"/>
<line x1="941" y1="537.5" x2="981" y2="537.5" stroke="#777" stroke-width="1.2"/>
<path d="M950 492V549M960 489L950.5 497.5L960 503.5M950.5 497.5H960" fill="none" stroke="#555" stroke-width="1.2"/>
<path d="M955 532Q959.5 524 965 529.5T975 529" fill="none" stroke="#333" stroke-width="1.2"/>
<rect x="932.5" y="552.0" width="8.600000000000023" height="12.100000000000023" rx="1.8" fill="#a9a9a9" stroke="#6f6f6f" stroke-width="1"/>
<path d="M962.9 573.3L996.9 560.8V573.3Z" fill="#a9a9a9"/>
<line x1="962.9" y1="573.9" x2="996.9" y2="573.9" stroke="#5a4a3a" stroke-width="1.2"/>
<text x="963" y="588.2" font-size="12" fill="#000" letter-spacing="0.3">0.0 %</text>
<rect x="1050.5" y="549" width="4" height="89" fill="#f3b3a3"/>
<line x1="1051.0" y1="549" x2="1051.0" y2="638" stroke="#ef6a4a" stroke-width="1"/>
<line x1="1054.0" y1="549" x2="1054.0" y2="638" stroke="#ef6a4a" stroke-width="1"/>
<rect x="1074.8" y="549" width="4" height="89" fill="#a9b3fb"/>
<line x1="1075.3" y1="549" x2="1075.3" y2="638" stroke="#4f5ff7" stroke-width="1"/>
<line x1="1078.3" y1="549" x2="1078.3" y2="638" stroke="#4f5ff7" stroke-width="1"/>
<rect x="1065" y="613.8" width="12" height="4" fill="#a9b3fb"/>
<line x1="1065" y1="614.3" x2="1077" y2="614.3" stroke="#4f5ff7" stroke-width="1"/>
<line x1="1065" y1="617.3" x2="1077" y2="617.3" stroke="#4f5ff7" stroke-width="1"/>
<rect x="1045.1" y="483.1" width="39.100000000000136" height="65.0" rx="7" fill="#f1f1f1" stroke="#a9a9a9" stroke-width="3"/>
<line x1="1050.6" y1="544.1" x2="1079.2" y2="488.6" stroke="#333" stroke-width="1.2"/>
<circle cx="1056.1" cy="493.90000000000003" r="5.4" fill="none" stroke="#333" stroke-width="1.1"/><path d="M1052.5 493.90000000000003h7.2M1056.1 490.3v7.2" stroke="#333" stroke-width="1.1"/>
<circle cx="1052.3" cy="567.5" r="14.2" fill="#f1f1f1" stroke="#a9a9a9" stroke-width="1.8"/>
<path d="M1047.1 562.8H1057.5L1052.3 555.5Z" fill="#444"/>
<circle cx="1052.3" cy="572.1" r="7.3" fill="#f4f4f4"/>
<path d="M1052.3 572.1V564.8000000000001A7.3 7.3 0 0 1 1059.6 572.1Z M1052.3 572.1V579.4A7.3 7.3 0 0 1 1045.0 572.1Z" fill="#a9a9a9"/>
<circle cx="1052.3" cy="572.1" r="6.8" fill="none" stroke="#555" stroke-width="1.0"/>
<path d="M1047.3 603.5H1057.3L1052.3 615.8Z M1047.3 628.5999999999999H1057.3L1052.3 615.8Z M1065.1 608.8V622.8L1052.3 615.8Z" fill="#f4f4f4" stroke="#a9a9a9" stroke-width="1.5" stroke-linejoin="round"/>
<circle cx="1052.3" cy="615.8" r="3.8" fill="#f4f4f4" stroke="#a9a9a9" stroke-width="1.5"/>
<line x1="1044.8" y1="615.8" x2="1048.8" y2="615.8" stroke="#a9a9a9" stroke-width="1.5"/>
<circle cx="1036.8" cy="615.8" r="8.4" fill="#f4f4f4" stroke="#a9a9a9" stroke-width="1.5"/>
<rect x="1025.8" y="562.8" width="8.0" height="12.0" rx="1.8" fill="#a9a9a9" stroke="#6f6f6f" stroke-width="1"/>
<rect x="1022" y="581" width="14.8" height="15" rx="1.2" fill="#6584ab"/>
<g transform="translate(1022 581) scale(0.925 0.938)"><path d="M2.2 7.8H6" stroke="#fff" stroke-width="2"/><path d="M5.3 5.2L8 7.8L5.3 10.4Z" fill="#fff"/><path d="M8.6 9.6H9.9V6.6H11.6V9.6" fill="none" stroke="#dfe7f0" stroke-width="0.9"/><path d="M3.3 11.6H13.8V6.4L11.4 4.2" fill="none" stroke="#eef3f8" stroke-width="1.1"/></g>
<path d="M986 623.5L1018.9 610.6V623.5Z" fill="#a9a9a9"/>
<line x1="986" y1="624.1" x2="1018.9" y2="624.1" stroke="#5a4a3a" stroke-width="1.2"/>
<text x="986" y="637" font-size="12" fill="#000" letter-spacing="0.3">0.0 %</text>
<circle cx="1138.3" cy="514.2" r="22.5" fill="#f1f1f1" stroke="#a9a9a9" stroke-width="3"/>
<path d="M1157.0 508.00000000000006L1126.0 499.00000000000006M1157.0 520.0L1126.0 529.5" stroke="#333" stroke-width="1.2"/>
<circle cx="1129.0" cy="514.2" r="8.3" fill="#f4f4f4"/>
<path d="M1129.0 514.2V505.90000000000003A8.3 8.3 0 0 1 1137.3 514.2Z M1129.0 514.2V522.5A8.3 8.3 0 0 1 1120.7 514.2Z" fill="#a9a9a9"/>
<circle cx="1129.0" cy="514.2" r="7.750000000000001" fill="none" stroke="#555" stroke-width="1.1"/>
<rect x="1121.8" y="547.2" width="8.8" height="11.7" rx="1.8" fill="#a9a9a9" stroke="#6f6f6f" stroke-width="1"/>
<rect x="1134.3999999999999" y="547.2" width="8.8" height="11.7" rx="1.8" fill="#a9a9a9" stroke="#6f6f6f" stroke-width="1"/>
<rect x="1147.0" y="547.2" width="8.8" height="11.7" rx="1.8" fill="#a9a9a9" stroke="#6f6f6f" stroke-width="1"/>
<rect x="1219.4" y="353.3" width="38.299999999999955" height="64.59999999999997" rx="7" fill="#f1f1f1" stroke="#a9a9a9" stroke-width="3"/>
<line x1="1224" y1="414" x2="1253" y2="358" stroke="#333" stroke-width="1.2"/>
<circle cx="1230" cy="363.7" r="5.4" fill="none" stroke="#333" stroke-width="1.1"/><path d="M1226.4 363.7h7.2M1230 360.1v7.2" stroke="#333" stroke-width="1.1"/>
<path d="M1250 394L1244.5 403.5L1249.5 403.5L1245 411.5M1243.5 408.5L1244.8 412L1248 409.5" fill="none" stroke="#333" stroke-width="1.1"/>
<path d="M1222.9 443.3L1254.7 431.3V443.3Z" fill="#a9a9a9"/>
<text x="1222" y="458.2" font-size="12" fill="#000" letter-spacing="0.3">0.0 %</text>
<rect x="1303.3" y="333.4" width="39.299999999999955" height="64.60000000000002" rx="7" fill="#f1f1f1" stroke="#a9a9a9" stroke-width="3"/>
<path d="M1308.3 339.9L1337.6 394.0M1337.6 339.9L1308.3 394.0" stroke="#333" stroke-width="1.1"/>
<circle cx="1322.9499999999998" cy="344.4" r="5.4" fill="#f1f1f1" stroke="#333" stroke-width="1.1"/><path d="M1319.35 344.4h7.2" stroke="#333" stroke-width="1.1"/>
<rect x="1303.3" y="413.9" width="39.299999999999955" height="46.10000000000002" rx="7" fill="#f1f1f1" stroke="#a9a9a9" stroke-width="3"/>
<rect x="1309.3" y="399" width="4" height="29" fill="#7c82fb"/>
<line x1="1309.8" y1="399" x2="1309.8" y2="428" stroke="#3f43f5" stroke-width="1"/>
<line x1="1312.8" y1="399" x2="1312.8" y2="428" stroke="#3f43f5" stroke-width="1"/>
<rect x="1333.2" y="399" width="4" height="29" fill="#dfe3fd"/>
<line x1="1333.7" y1="399" x2="1333.7" y2="428" stroke="#aab4fb" stroke-width="1"/>
<line x1="1336.7" y1="399" x2="1336.7" y2="428" stroke="#aab4fb" stroke-width="1"/>
<circle cx="1323.3" cy="437.3" r="16" fill="#f1f1f1" stroke="#333" stroke-width="1.2"/>
<circle cx="1316.5" cy="438.5" r="6.3" fill="none" stroke="#333" stroke-width="1.2"/>
<path d="M1320 424L1338 438L1320 452" fill="none" stroke="#333" stroke-width="1.2"/>
<rect x="1306.3" y="473.2" width="8.8" height="11.7" rx="1.8" fill="#a9a9a9" stroke="#6f6f6f" stroke-width="1"/>
<rect x="1318.6" y="473.2" width="8.8" height="11.7" rx="1.8" fill="#a9a9a9" stroke="#6f6f6f" stroke-width="1"/>
<rect x="1330.8999999999999" y="473.2" width="8.8" height="11.7" rx="1.8" fill="#a9a9a9" stroke="#6f6f6f" stroke-width="1"/>
<line x1="1371.4" y1="400" x2="1371.4" y2="418" stroke="#a9a9a9" stroke-width="1.6"/>
<circle cx="1371.4" cy="426.4" r="8.3" fill="#f0f0f0" stroke="#a9a9a9" stroke-width="1.6"/>
<text x="1371.4" y="431.0" font-size="13" text-anchor="middle" fill="#333">T</text>
<rect x="1335.1" y="445.8" width="73.5" height="19.80000000000001" fill="#f0f0f0" stroke="#dbe7f1" stroke-width="3"/>
<text x="1341" y="460.00000000000006" font-size="12.5" fill="#000" letter-spacing="0.25">-252.80 °C</text>
<line x1="1362.8" y1="521.6" x2="1362.8" y2="539" stroke="#a9a9a9" stroke-width="1.6"/>
<circle cx="1362.8" cy="547.1" r="8.3" fill="#f0f0f0" stroke="#a9a9a9" stroke-width="1.6"/>
<text x="1362.8" y="551.7" font-size="13" text-anchor="middle" fill="#333">T</text>
<rect x="1326.4" y="566.5" width="72.89999999999986" height="19.200000000000045" fill="#f0f0f0" stroke="#dbe7f1" stroke-width="3"/>
<text x="1332.5" y="580.4" font-size="12.5" fill="#000" letter-spacing="0.25">-252.80 °C</text>
<path d="M1411.8 269.6H1591M1411.8 269.6V598M1590.8 269.6V598M1411.8 597.9H1591" fill="none" stroke="#6e6e6e" stroke-width="2.2" stroke-dasharray="8.8 8"/>
<text x="1414" y="594.7" font-size="12" fill="#000">Room</text>
<rect x="1460.3" y="279.4" width="73.0" height="19.200000000000045" fill="#f0f0f0" stroke="#dbe7f1" stroke-width="3"/>
<text x="1466.5" y="293.3" font-size="12.5" fill="#000" letter-spacing="0.25">-252.80 °C</text>
<circle cx="1496.8" cy="318.8" r="8.3" fill="#f0f0f0" stroke="#a9a9a9" stroke-width="1.6"/>
<text x="1496.8" y="323.40000000000003" font-size="13" text-anchor="middle" fill="#333">T</text>
<rect x="1419.4" y="344.7" width="73.0" height="19.19999999999999" fill="#f0f0f0" stroke="#dbe7f1" stroke-width="3"/>
<text x="1425.5" y="358.59999999999997" font-size="12.5" fill="#000" letter-spacing="0">0.00 RH</text>
<circle cx="1455.9" cy="384.1" r="8.3" fill="#f0f0f0" stroke="#a9a9a9" stroke-width="1.6"/>
<text x="1455.9" y="388.70000000000005" font-size="13" text-anchor="middle" fill="#333">H</text>
<rect x="1452.6" y="422.6" width="16.6" height="18.7" fill="#ffd700" stroke="#c9a800" stroke-width="1"/>
<circle cx="1461" cy="432" r="5.2" fill="#f7b5b5"/>
<circle cx="1455" cy="425" r="0.9" fill="#555"/>
<circle cx="1467" cy="425" r="0.9" fill="#555"/>
<circle cx="1455" cy="439" r="0.9" fill="#555"/>
<circle cx="1467" cy="439" r="0.9" fill="#555"/>
<rect x="1478" y="424.6" width="74" height="15" fill="#f0f0f0" stroke="#dbe7f1" stroke-width="2"/>
<text x="1482.5" y="435" font-size="9.5" fill="#000">Off</text>
<rect x="1455" y="483" width="27.5" height="4.5" rx="2.2" fill="#f4f4f4" stroke="#a9a9a9" stroke-width="1.6"/>
<path d="M1458.5 488V494.5L1462 499H1476L1479.5 494.5V488" fill="#f4f4f4" stroke="#a9a9a9" stroke-width="1.6"/>
<path d="M1459 493.5H1479" stroke="#a9a9a9" stroke-width="1"/>
<path d="M1482.5 495.5Q1490 502 1487 509Q1484.5 513.5 1481 514Q1483 510 1480.5 507Q1478.5 510.5 1477.5 508Q1476 503 1482.5 495.5Z" fill="#a9a9a9"/>
</svg>
<!--/DIAG-->
</body></html>
